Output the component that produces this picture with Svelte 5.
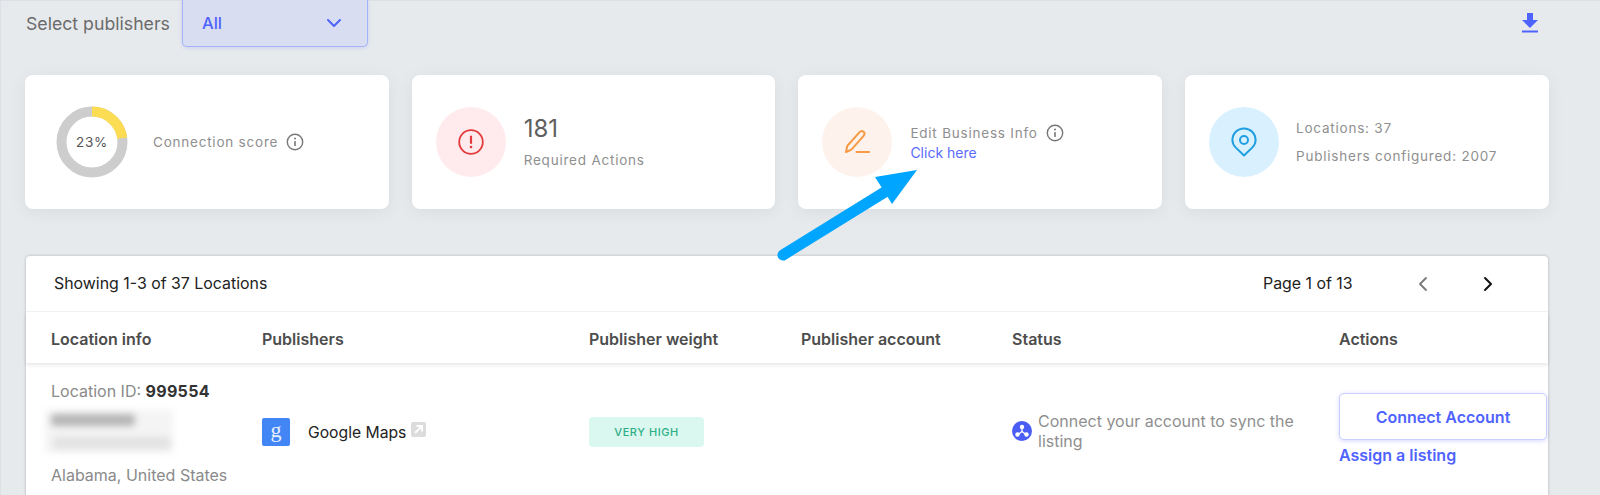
<script>
  const columns = ['Location info', 'Publishers', 'Publisher weight', 'Publisher account', 'Status', 'Actions'];
</script>

<div class="page">
  <header class="top">
    <span class="top-label">Select publishers</span>
    <div class="select">
      <span>All</span>
      <svg width="16" height="10" viewBox="0 0 16 10" fill="none"><path d="M2 2l6 6 6-6" stroke="#4f63ff" stroke-width="2" stroke-linecap="round" stroke-linejoin="round"/></svg>
    </div>
    <svg class="download" width="18" height="20" viewBox="0 0 18 20"><path d="M6 0h6v7h5l-8 8-8-8h5z" fill="#4f63ff"/><rect x="1" y="17.5" width="16" height="2" fill="#4f63ff"/></svg>
  </header>

  <section class="cards">
    <div class="card">
      <div class="donut">
        <svg width="72" height="72" viewBox="0 0 72 72" fill="none">
          <circle cx="36" cy="36" r="30.5" stroke="#cdcdcd" stroke-width="10"/>
          <circle cx="36" cy="36" r="30.5" stroke="#fcdc52" stroke-width="10" pathLength="100" stroke-dasharray="23 77" transform="rotate(-90 36 36)"/>
        </svg>
        <span class="pct">23%</span>
      </div>
      <div class="inline muted score">
        <span>Connection score</span>
        <svg class="info" width="18" height="18" viewBox="0 0 18 18" fill="none"><circle cx="9" cy="9" r="7.7" stroke="#777" stroke-width="1.4"/><rect x="8.2" y="8" width="1.6" height="5" rx=".6" fill="#777"/><circle cx="9" cy="5.6" r="1" fill="#777"/></svg>
      </div>
    </div>

    <div class="card">
      <div class="badge-circle red">
        <svg width="26" height="26" viewBox="0 0 26 26" fill="none"><circle cx="13" cy="13" r="11.8" stroke="#e23b3b" stroke-width="1.8"/><path d="M13 7.5v6.5" stroke="#e23b3b" stroke-width="2.2" stroke-linecap="round"/><circle cx="13" cy="18" r="1.3" fill="#e23b3b"/></svg>
      </div>
      <div class="stack-actions">
        <div class="big">181</div>
        <div class="muted">Required Actions</div>
      </div>
    </div>

    <div class="card">
      <div class="badge-circle orange">
        <svg width="26" height="26" viewBox="0 0 26 26" fill="none"><path d="M2 23l1.200-6L15.600 3.200c1.200-1.300 2.900-1.400 4-.4 1.100 1 1.100 2.700 0 4L7.400 20.600 2 23z" stroke="#f79a45" stroke-width="2" stroke-linejoin="round"/><path d="M12.500 23h12.500" stroke="#f79a45" stroke-width="2" stroke-linecap="round"/></svg>
      </div>
      <div class="stack-edit">
        <div class="inline muted">
          <span>Edit Business Info</span>
          <svg class="info" width="18" height="18" viewBox="0 0 18 18" fill="none"><circle cx="9" cy="9" r="7.7" stroke="#777" stroke-width="1.4"/><rect x="8.2" y="8" width="1.6" height="5" rx=".6" fill="#777"/><circle cx="9" cy="5.6" r="1" fill="#777"/></svg>
        </div>
        <div class="click">Click here</div>
      </div>
    </div>

    <div class="card">
      <div class="badge-circle blue">
        <svg width="26" height="30" viewBox="0 0 26 30" fill="none"><path d="M13 28.500 4.600 20.400C2.500 18.300 1.400 15.800 1.400 13 1.400 6.600 6.600 1.400 13 1.400S24.600 6.600 24.600 13c0 2.800-1.100 5.300-3.200 7.400L13 28.500z" stroke="#1f9fe0" stroke-width="2" stroke-linejoin="round"/><circle cx="13" cy="13" r="4" stroke="#1f9fe0" stroke-width="2"/></svg>
      </div>
      <div class="stack-loc muted">
        <div>Locations: 37</div>
        <div>Publishers configured: 2007</div>
      </div>
    </div>
  </section>

  <section class="table">
    <div class="bar">
      <span>Showing 1-3 of 37 Locations</span>
      <div class="pager">
        <span>Page 1 of 13</span>
        <svg class="prev" width="10" height="16" viewBox="0 0 10 16" fill="none"><path d="M8 2 2 8l6 6" stroke="#777" stroke-width="1.8" stroke-linecap="round" stroke-linejoin="round"/></svg>
        <svg class="next" width="10" height="16" viewBox="0 0 10 16" fill="none"><path d="m2 2 6 6-6 6" stroke="#111" stroke-width="2" stroke-linecap="round" stroke-linejoin="round"/></svg>
      </div>
    </div>

    <div class="grid head">
      {#each columns as c}<div>{c}</div>{/each}
    </div>

    <div class="grid row">
      <div class="loc">
        <div class="loc-id">Location ID: <b>999554</b></div>
        <div class="blur"><i class="b1"></i><i class="b2"></i></div>
        <div class="loc-addr">Alabama, United States</div>
      </div>
      <div class="pub">
        <span class="g">g</span>
        <span class="pub-name">Google Maps</span>
        <svg class="ext" width="15" height="15" viewBox="0 0 15 15"><rect width="15" height="15" rx="2" fill="#dcdcdc"/><path d="M4 11l6-6M5.500 4H11v5.500" stroke="#fff" stroke-width="1.800" fill="none"/></svg>
      </div>
      <div><span class="weight">VERY HIGH</span></div>
      <div></div>
      <div class="status">
        <svg width="20" height="20" viewBox="0 0 20 20"><circle cx="10" cy="10" r="10" fill="#4a5ef5"/><path d="M10 6v4.500M10 10.500l-4 3M10 10.500l4 3" stroke="#fff" stroke-width="1.300"/><circle cx="10" cy="6" r="2.200" fill="#fff"/><circle cx="5.500" cy="13.500" r="2.200" fill="#fff"/><circle cx="14.500" cy="13.500" r="2.200" fill="#fff"/></svg>
        <span>Connect your account to sync the listing</span>
      </div>
      <div class="actions">
        <button>Connect Account</button>
        <span class="assign">Assign a listing</span>
      </div>
    </div>
  </section>

  <svg class="arrow" width="1600" height="495" viewBox="0 0 1600 495">
    <path d="M783 255 888 190" stroke="#00a5ff" stroke-width="11" stroke-linecap="round"/>
    <path d="M917 170 875 177 892 204z" fill="#00a5ff"/>
  </svg>
</div>

<style>
  :global(body) { margin: 0; background: #e7eaed; }
  .page {
    position: relative;
    height: 495px;
    width: 1600px;
    overflow: hidden;
    background: #e7eaed;
    font-family: Inter, "Liberation Sans", sans-serif;
    box-shadow: inset 1px 1px 0 #dcdfe3;
    color: #222;
  }
  .top {
    display: flex;
    align-items: center;
    height: 47px;
    padding: 0 61px 0 26px;
  }
  .top-label { font-size: 17.7px; color: #6b6b6b; width: 156px; flex: none; white-space: nowrap; }
  .select {
    box-sizing: border-box;
    width: 186px;
    height: 48px;
    margin-top: -1px;
    padding: 0 25px 0 19px;
    display: flex;
    align-items: center;
    justify-content: space-between;
    background: #d9ddf1;
    border: 1px solid #a5b3fb;
    border-top-color: #c5cdf5;
    border-radius: 0 0 5px 5px;
    color: #4f63ff;
    font-size: 16.5px;
    font-weight: 500;
    box-shadow: 0 1px 4px rgba(80, 100, 255, .18);
  }
  .download { margin-left: auto; margin-top: -2px; }
  .cards {
    display: grid;
    grid-template-columns: repeat(4, 363.7px);
    gap: 23px;
    margin: 28px 0 0 25px;
  }
  .card {
    height: 134px;
    background: #fff;
    border-radius: 8px;
    display: flex;
    align-items: center;
    padding-left: 24px;
    box-shadow: 0 3px 18px rgba(0, 0, 0, .06);
  }
  .muted { font-size: 13.5px; color: #8f8f8f; letter-spacing: .78px; }
  .inline { display: flex; align-items: center; gap: 8px; }
  .donut { position: relative; width: 72px; height: 72px; margin-left: 7px; }
  .donut svg { display: block; }
  .pct {
    position: absolute;
    inset: 0;
    display: flex;
    align-items: center;
    justify-content: center;
    font-size: 13.5px;
    letter-spacing: .7px;
    color: #555;
  }
  .score { margin-left: 25px; }
  .badge-circle {
    flex: none;
    width: 70px;
    height: 70px;
    border-radius: 50%;
    display: flex;
    align-items: center;
    justify-content: center;
  }
  .red { background: #ffebee; }
  .orange { background: #fef3ec; }
  .blue { background: #d9f1ff; }
  .stack-actions { margin-left: 18px; margin-top: -3px; }
  .big { font-size: 24px; color: #5f5f5f; line-height: 30px; margin-bottom: 8px; }
  .stack-edit { margin-left: 18px; margin-top: 1px; }
  .click { font-size: 14px; color: #5a6bff; line-height: 16px; margin-top: 3px; }
  .stack-loc { margin-left: 17px; margin-top: -1px; }
  .stack-loc div { line-height: 16px; }
  .stack-loc div + div { margin-top: 12px; }
  .table {
    margin: 47px 0 0 26px;
    width: 1522px;
    height: 300px;
    background: #fff;
    border-radius: 4px 4px 0 0;
    box-shadow: 0 0 3px rgba(0, 0, 0, .25);
    font-size: 16px;
  }
  .bar {
    height: 55px;
    display: flex;
    align-items: center;
    justify-content: space-between;
    padding-left: 28px;
    border-bottom: 1px solid #f2f3f5;
    color: #222;
    font-size: 15.9px;
  }
  .pager { display: flex; align-items: center; width: 285px; }
  .prev { margin-left: 65px; }
  .next { margin-left: 55px; }
  .grid {
    display: grid;
    grid-template-columns: 211px 327px 212px 211px 327px 1fr;
    padding-left: 25px;
    align-items: center;
  }
  .head {
    box-sizing: border-box;
    height: 51px;
    padding-top: 3px;
    font-size: 16px;
    font-weight: 600;
    color: #4d4d4d;
    box-shadow: 0 2px 4px rgba(0, 0, 0, .1);
    position: relative;
  }
  .row { height: 139px; align-items: start; }
  .loc { color: #8a8a8a; font-size: 16px; padding-top: 19px; }
  .loc-id { line-height: 18px; }
  .loc-id b { color: #333; font-weight: 700; letter-spacing: .3px; }
  .blur {
    height: 43px;
    margin: 10px 0 13px -6px;
    width: 128px;
    position: relative;
    background: #f4f4f4;
    filter: blur(3.5px);
  }
  .blur i { position: absolute; display: block; border-radius: 4px; }
  .b1 { left: 6px; top: 4px; width: 84px; height: 12px; background: #b5b5b5; }
  .b2 { left: 8px; top: 27px; width: 118px; height: 12px; background: #e2e2e2; }
  .loc-addr { line-height: 18px; }
  .pub { display: flex; align-items: center; padding-top: 55px; }
  .g {
    width: 28px;
    height: 28px;
    border-radius: 2px;
    background: #4285f4;
    color: #e8f0ff;
    font: 22px/24px "Liberation Serif", serif;
    text-align: center;
  }
  .pub-name { margin-left: 18px; color: #222; font-size: 15.7px; }
  .ext { margin: -6px 0 0 5px; }
  .weight {
    display: flex;
    align-items: center;
    justify-content: center;
    width: 115px;
    height: 30px;
    margin-top: 54px;
    background: #daf8f0;
    border-radius: 4px;
    color: #2fae85;
    font-size: 11px;
    font-weight: 500;
    letter-spacing: .55px;
  }
  .status {
    display: flex;
    align-items: center;
    gap: 6px;
    padding-top: 48px;
    color: #8f8f8f;
    line-height: 20px;
    width: 290px;
  }
  .status svg { flex: none; }
  .actions { display: flex; flex-direction: column; align-items: flex-start; padding-top: 30px; }
  .actions button {
    box-sizing: border-box;
    width: 208px;
    height: 47px;
    background: #fff;
    border: 1px solid #c9d0ff;
    border-radius: 5px;
    color: #4f63ff;
    font: 600 16px Inter, "Liberation Sans", sans-serif;
    box-shadow: 0 1px 4px rgba(80, 100, 255, .25);
  }
  .assign { margin-top: 6px; color: #4f63ff; font-weight: 600; line-height: 18px; }
  .arrow { position: absolute; left: 0; top: 0; pointer-events: none; }
</style>
